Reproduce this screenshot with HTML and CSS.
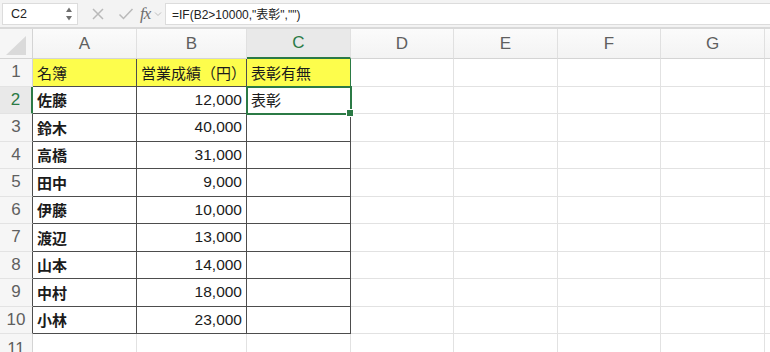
FILE: index.html
```html
<!DOCTYPE html>
<html lang="ja">
  <head>
    <meta charset="UTF-8" />
    <title>Sheet1</title>
    <link rel="stylesheet" href="styles.css">
  </head>
  <body>
    <div class="toolbar">
      <div class="namebox">
        <span class="namebox-ref">C2</span>
        <svg class="spin" width="8" height="16" viewBox="0 0 8 16">
          <path d="M1 6 L4 1.5 L7 6 Z" fill="#6f6f6f" />
          <path d="M1 10 L4 14.5 L7 10 Z" fill="#6f6f6f" />
        </svg>
      </div>
      <div class="fbtns">
        <svg width="14" height="14" viewBox="0 0 14 14">
          <path d="M2 2 L12 12 M12 2 L2 12" stroke="#b9b9b9" stroke-width="1.5" fill="none" />
        </svg>
        <svg width="16" height="14" viewBox="0 0 16 14">
          <path d="M1.5 7.5 L5.5 11.5 L14.5 2" stroke="#b9b9b9" stroke-width="1.5" fill="none" />
        </svg>
        <span class="fx">fx</span>
        <svg width="8" height="6" viewBox="0 0 8 6">
          <path d="M1 1.5 L4 4.5 L7 1.5" stroke="#bdbdbd" stroke-width="1" fill="none" />
        </svg>
      </div>
      <div class="formula">=IF(B2&gt;10000,"表彰","")</div>
    </div>

    <div class="sheet">
      <!-- header row -->
      <div class="corner"><svg width="30" height="26" viewBox="0 0 30 26"><path d="M26 4 L26 23 L6 23 Z" fill="#dadada" /></svg></div>
      <div class="colhead">A</div>
      <div class="colhead">B</div>
      <div class="colhead is-active">C</div>
      <div class="colhead">D</div>
      <div class="colhead">E</div>
      <div class="colhead">F</div>
      <div class="colhead">G</div>
      <div class="colhead"></div>

      <!-- 1 -->
      <div class="rowhead">1</div>
      <div class="cell head tbl">名簿</div>
      <div class="cell head tbl">営業成績（円）</div>
      <div class="cell head tbl c1">表彰有無</div>
      <div class="cell"></div><div class="cell"></div><div class="cell"></div><div class="cell"></div><div class="cell"></div>

      <!-- 2 -->
      <div class="rowhead is-active">2</div>
      <div class="cell tbl name">佐藤</div>
      <div class="cell tbl num">12,000</div>
      <div class="cell tbl selected">表彰</div>
      <div class="cell"></div><div class="cell"></div><div class="cell"></div><div class="cell"></div><div class="cell"></div>

      <!-- 3 -->
      <div class="rowhead tblrow">3</div>
      <div class="cell tbl name">鈴木</div>
      <div class="cell tbl num">40,000</div>
      <div class="cell tbl"></div>
      <div class="cell"></div><div class="cell"></div><div class="cell"></div><div class="cell"></div><div class="cell"></div>

      <!-- 4 -->
      <div class="rowhead tblrow">4</div>
      <div class="cell tbl name">高橋</div>
      <div class="cell tbl num">31,000</div>
      <div class="cell tbl"></div>
      <div class="cell"></div><div class="cell"></div><div class="cell"></div><div class="cell"></div><div class="cell"></div>

      <!-- 5 -->
      <div class="rowhead tblrow">5</div>
      <div class="cell tbl name">田中</div>
      <div class="cell tbl num">9,000</div>
      <div class="cell tbl"></div>
      <div class="cell"></div><div class="cell"></div><div class="cell"></div><div class="cell"></div><div class="cell"></div>

      <!-- 6 -->
      <div class="rowhead tblrow">6</div>
      <div class="cell tbl name">伊藤</div>
      <div class="cell tbl num">10,000</div>
      <div class="cell tbl"></div>
      <div class="cell"></div><div class="cell"></div><div class="cell"></div><div class="cell"></div><div class="cell"></div>

      <!-- 7 -->
      <div class="rowhead tblrow">7</div>
      <div class="cell tbl name">渡辺</div>
      <div class="cell tbl num">13,000</div>
      <div class="cell tbl"></div>
      <div class="cell"></div><div class="cell"></div><div class="cell"></div><div class="cell"></div><div class="cell"></div>

      <!-- 8 -->
      <div class="rowhead tblrow">8</div>
      <div class="cell tbl name">山本</div>
      <div class="cell tbl num">14,000</div>
      <div class="cell tbl"></div>
      <div class="cell"></div><div class="cell"></div><div class="cell"></div><div class="cell"></div><div class="cell"></div>

      <!-- 9 -->
      <div class="rowhead tblrow">9</div>
      <div class="cell tbl name">中村</div>
      <div class="cell tbl num">18,000</div>
      <div class="cell tbl"></div>
      <div class="cell"></div><div class="cell"></div><div class="cell"></div><div class="cell"></div><div class="cell"></div>

      <!-- 10 -->
      <div class="rowhead tblrow">10</div>
      <div class="cell tbl name">小林</div>
      <div class="cell tbl num">23,000</div>
      <div class="cell tbl"></div>
      <div class="cell"></div><div class="cell"></div><div class="cell"></div><div class="cell"></div><div class="cell"></div>

      <!-- 11 -->
      <div class="rowhead">11</div>
      <div class="cell"></div><div class="cell"></div><div class="cell"></div>
      <div class="cell"></div><div class="cell"></div><div class="cell"></div><div class="cell"></div><div class="cell"></div>
    </div>
  </body>
</html>
```

FILE: styles.css
```css
:root {
  --green: #2b7a45;
  --grid: #e2e2e2;
  --line: #4d4d4d;
  --head-bg: #f6f6f6;
  --head-text: #5f5f5f;
  --yellow: #fdfd4c;
}

* {
  margin: 0;
  padding: 0;
  box-sizing: border-box;
}

body {
  width: 770px;
  height: 352px;
  overflow: hidden;
  background: #fff;
  font-family: "Liberation Sans", "Noto Sans CJK JP", sans-serif;
  color: #1b1b1b;
}

/* formula bar */
.toolbar {
  display: flex;
  align-items: center;
  height: 29px;
  padding: 3px 0 3px 2px;
  background: #f3f3f3;
  border-bottom: 2px solid #d9d9d9;
}

.namebox {
  display: flex;
  align-items: center;
  justify-content: space-between;
  width: 76px;
  height: 22px;
  padding: 0 4px 0 8px;
  background: #fff;
  border: 1px solid #dcdcdc;
  font-size: 12.5px;
  color: #222;
}

.fbtns {
  display: flex;
  align-items: center;
  width: 87px;
  padding-left: 13px;
}

.fbtns svg:nth-child(1) {
  margin-right: 13px;
}

.fbtns svg:nth-child(2) {
  margin-right: 6px;
}

.fx {
  font-family: "Liberation Serif", serif;
  font-style: italic;
  font-size: 17px;
  color: #6e6e6e;
  margin-right: 4px;
  letter-spacing: -1px;
}

.formula {
  flex: 1;
  height: 22px;
  display: flex;
  align-items: center;
  padding-left: 6px;
  background: #fff;
  border: 1px solid #dcdcdc;
  border-right: none;
  font-size: 12px;
  color: #222;
}

/* sheet grid */
.sheet {
  display: grid;
  grid-template-columns: 33px 104px 110px 104px 103px 104px 103px 104px 30px;
  grid-template-rows: 30px repeat(10, 27.5px) 30px;
}

.corner {
  background: var(--head-bg);
  border-right: 1px solid #d4d4d4;
  border-bottom: 1px solid #d4d4d4;
  display: flex;
  align-items: flex-end;
}

.colhead {
  background: linear-gradient(#fbfbfb, #f3f3f3);
  border-right: 1px solid #e0e0e0;
  border-bottom: 1px solid #d4d4d4;
  display: flex;
  align-items: center;
  justify-content: center;
  font-size: 17px;
  color: var(--head-text);
}

.colhead.is-active {
  background: #e9e9e9;
  color: var(--green);
  border-bottom: 2px solid var(--green);
}

.rowhead {
  background: var(--head-bg);
  border-right: 1px solid #d4d4d4;
  border-bottom: 1px solid #e3e3e3;
  display: flex;
  align-items: center;
  justify-content: center;
  font-size: 17px;
  color: var(--head-text);
}

.rowhead.tblrow {
  border-right-color: var(--line);
}

.rowhead.is-active {
  background: #e9e9e9;
  color: var(--green);
  border-right: 2px solid var(--green);
}

.cell {
  border-right: 1px solid var(--grid);
  border-bottom: 1px solid var(--grid);
  display: flex;
  align-items: center;
  padding: 0 4px;
  font-size: 15px;
  white-space: nowrap;
  overflow: hidden;
}

.cell.tbl {
  border-right-color: var(--line);
  border-bottom-color: var(--line);
}

.cell.head {
  background: var(--yellow);
  padding: 0 2px 0 4px;
}

.cell.c1 {
  border-right-color: var(--green);
}

.cell.name {
  font-weight: bold;
}

.cell.num {
  justify-content: flex-end;
  font-size: 15.5px;
}

.cell.selected {
  position: relative;
  overflow: visible;
  outline: 2px solid var(--green);
  outline-offset: -1px;
  z-index: 2;
}

.cell.selected::after {
  content: "";
  position: absolute;
  right: -4px;
  bottom: -4px;
  width: 6px;
  height: 6px;
  background: var(--green);
  border: 1px solid #fff;
}
```
